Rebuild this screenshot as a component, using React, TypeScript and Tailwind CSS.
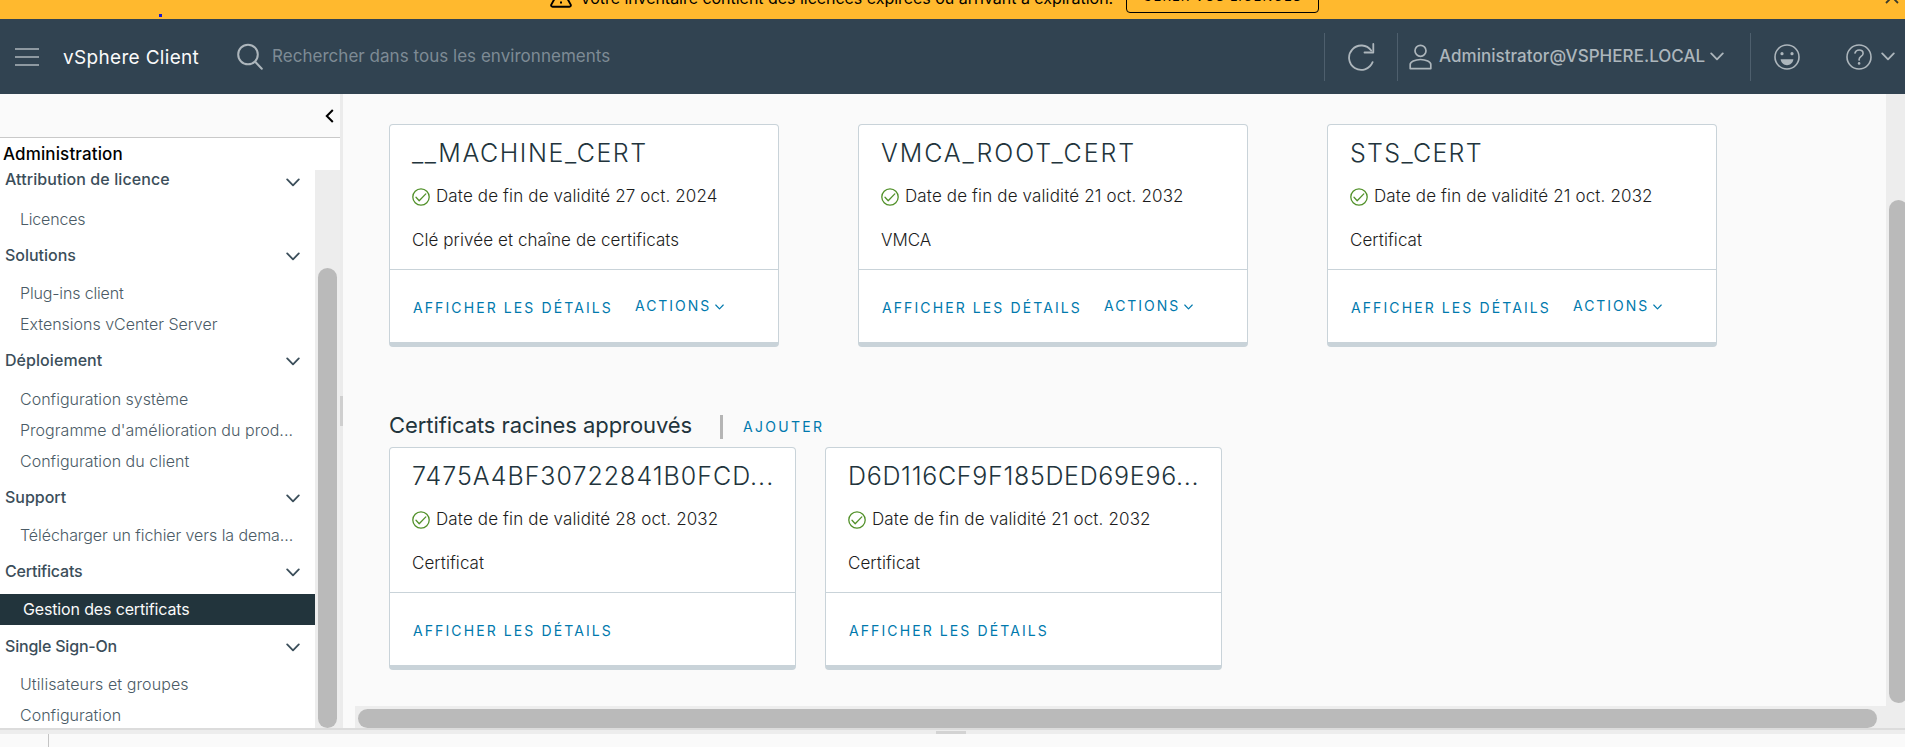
import type { ReactNode } from 'react';

function Chevron({ className }: { className: string }) {
  return (
    <svg viewBox="0 0 14 9" fill="none" stroke="currentColor" strokeWidth="1.8" strokeLinecap="round" strokeLinejoin="round" className={className}>
      <path d="M1.2 1.4 7 7.4l5.8-6" />
    </svg>
  );
}

function Banner() {
  return (
    <div className="relative h-[19px] shrink-0 overflow-hidden bg-[#ffb92e] text-black">
      <div className="-mt-[23px] flex h-[36px] items-end pl-[550px]">
        <svg viewBox="0 0 22 20" fill="none" stroke="currentColor" strokeWidth="1.9" strokeLinejoin="round" className="mb-[5px] h-5 w-[22px]">
          <path d="M9.6 1.8 1.3 16.6c-.5 1 .1 2.1 1.3 2.1h16.8c1.2 0 1.8-1.1 1.3-2.1L12.4 1.8c-.6-1-2.2-1-2.8 0Z" />
          <path d="M11 6.5v5M11 13.6v2" strokeWidth="2" />
        </svg>
        <span className="mb-[3px] ml-[8px] w-[546px] whitespace-nowrap text-[16px] font-[370] leading-[24px] tracking-[-0.03px]">
          Votre inventaire contient des licences expirées ou arrivant à expiration.
        </span>
        <button className="flex h-[32px] w-[193px] items-center justify-center whitespace-nowrap rounded-[4px] border border-black text-[13px] tracking-[1.1px]">
          GÉRER VOS LICENCES
        </button>
        <svg viewBox="0 0 14 14" fill="none" stroke="#3a3a2a" strokeWidth="1.8" className="mb-[9px] ml-[566px] h-[14px] w-[14px]">
          <path d="m1 1 12 12M13 1 1 13" />
        </svg>
      </div>
      <span className="absolute left-[159px] top-[14px] size-[3px] bg-[#1a1ad0]" />
    </div>
  );
}

function Divider() {
  return <span className="h-[48px] w-px bg-[#4e5f6d]" />;
}

function Header() {
  return (
    <header className="flex h-[75px] shrink-0 items-center bg-[#314351] text-[#adb6bc]">
      <svg viewBox="0 0 24 18" stroke="currentColor" strokeWidth="1.6" className="ml-[15px] h-[18px] w-6">
        <path d="M0 1h24M0 9h24M0 17h24" />
      </svg>
      <span className="ml-[24px] w-[150px] whitespace-nowrap pt-[3px] text-[19px] tracking-[0.32px] text-[#fafafa]">vSphere Client</span>
      <svg viewBox="0 0 26 27" fill="none" stroke="currentColor" strokeWidth="2" strokeLinecap="round" className="ml-[24px] h-[27px] w-[26px]">
        <circle cx="11" cy="11.5" r="9.8" />
        <path d="m18.2 18.8 6.6 7" />
      </svg>
      <span className="ml-[9px] whitespace-nowrap pt-px text-[17px] tracking-[0.03px] text-[#7e8b95]">Rechercher dans tous les environnements</span>
      <div className="ml-auto flex items-center">
        <Divider />
        <svg viewBox="0 0 28 28" fill="none" stroke="currentColor" strokeWidth="1.8" strokeLinecap="round" strokeLinejoin="round" className="ml-[22px] h-[28px] w-[28px]">
          <path d="M25.6 19.2A12.2 12.2 0 1 1 24.2 7.6" />
          <path d="M26.3 1v8.5h-8.8" />
        </svg>
        <span className="w-[22px]" />
        <Divider />
        <svg viewBox="0 0 23 26" fill="none" stroke="currentColor" strokeWidth="1.7" strokeLinejoin="round" className="ml-[11px] h-[26px] w-[23px]">
          <circle cx="11.5" cy="6.8" r="5.5" />
          <path d="M1.2 24.6v-4.2c0-2.3 4.7-4.9 10.3-4.9s10.3 2.6 10.3 4.9v4.2Z" />
        </svg>
        <span className="ml-[7px] w-[266px] whitespace-nowrap pt-px text-[17px] font-[450] tracking-[0.04px]">Administrator@VSPHERE.LOCAL</span>
        <Chevron className="ml-[5px] h-[9px] w-[14px]" />
        <span className="w-[26px]" />
        <Divider />
        <svg viewBox="0 0 26 26" fill="none" stroke="currentColor" strokeWidth="1.6" className="ml-[23px] h-[26px] w-[26px]">
          <circle cx="13" cy="13" r="12" />
          <circle cx="8" cy="9.7" r="1.6" fill="currentColor" stroke="none" />
          <circle cx="18" cy="9.7" r="1.6" fill="currentColor" stroke="none" />
          <path d="M6.6 15.3h12.8c-.5 3.5-3.2 5.9-6.4 5.9s-5.9-2.4-6.4-5.9Z" fill="currentColor" stroke="none" />
        </svg>
        <svg viewBox="0 0 26 26" fill="none" stroke="currentColor" strokeWidth="1.6" className="ml-[46px] h-[26px] w-[26px]">
          <circle cx="13" cy="13" r="12" />
          <path d="M9 9c.6-2 2.2-3 4.1-3 2.3 0 4 1.4 4 3.4 0 2.8-4 3.3-4 6v.7" strokeLinecap="round" />
          <circle cx="13.1" cy="19.4" r="1.3" fill="currentColor" stroke="none" />
        </svg>
        <Chevron className="ml-[9px] mr-[10px] h-[9px] w-[14px]" />
      </div>
    </header>
  );
}

function Group({ title, lift = 'pb-[2px]', tracking = 'tracking-[-0.02px]', children }: { title: string; lift?: string; tracking?: string; children: ReactNode }) {
  return (
    <section>
      <div className="flex h-[43.4px] items-center justify-between pl-[5px] pr-[15px] text-[#3b4e5a]">
        <span className={`text-[16px] font-[550] ${lift} ${tracking}`}>{title}</span>
        <Chevron className="mt-px h-[9px] w-[14px]" />
      </div>
      {children}
    </section>
  );
}

function Item({ children, tracking = 'tracking-[0.02px]' }: { children: string; tracking?: string }) {
  return (
    <div className={`flex h-[31px] items-center whitespace-nowrap pl-[20px] text-[16px] font-[350] text-[#4b5b66] ${tracking}`}>{children}</div>
  );
}

function Sidebar() {
  return (
    <aside className="flex w-[340px] shrink-0 flex-col bg-white">
      <div className="flex h-[44px] shrink-0 items-center justify-end border-b border-[#c9c9c9] bg-[#fafafa] pr-[6px]">
        <svg viewBox="0 0 9 14" fill="none" stroke="black" strokeWidth="2" className="h-[14px] w-[9px]">
          <path d="M7.8 1 1.8 7l6 6" />
        </svg>
      </div>
      <div className="h-[32px] shrink-0 pl-[3px] text-[17px] font-[550] leading-[32px] tracking-[0.13px] text-black">Administration</div>
      <div className="flex min-h-0 flex-1">
        <nav className="w-[315px] overflow-hidden">
          <div className="-mt-[10px]">
            <Group title="Attribution de licence" lift="pb-[5px]" tracking="tracking-[0.08px]">
              <Item tracking="tracking-[-0.2px]">Licences</Item>
            </Group>
            <Group title="Solutions">
              <Item tracking="tracking-[-0.15px]">Plug-ins client</Item>
              <Item tracking="tracking-[-0.01px]">Extensions vCenter Server</Item>
            </Group>
            <Group title="Déploiement" tracking="tracking-[0.06px]">
              <Item>Configuration système</Item>
              <Item tracking="tracking-[0.03px]">Programme d'amélioration du prod...</Item>
              <Item>Configuration du client</Item>
            </Group>
            <Group title="Support">
              <Item tracking="tracking-[-0.07px]">Télécharger un fichier vers la dema...</Item>
            </Group>
            <Group title="Certificats" tracking="tracking-[-0.2px]">
              <div className="flex h-[31px] items-center bg-[#22343c] pl-[23px] text-[16px] tracking-[-0.15px] text-[#fafafa]">Gestion des certificats</div>
            </Group>
            <Group title="Single Sign-On" tracking="tracking-[-0.2px]">
              <Item tracking="tracking-[0.1px]">Utilisateurs et groupes</Item>
              <Item>Configuration</Item>
            </Group>
          </div>
        </nav>
        <div className="flex-1 bg-[#ededed] pl-[3px] pr-[3px] pt-[98px]">
          <div className="h-[460px] w-[19px] rounded-full bg-[#bababa]" />
        </div>
      </div>
    </aside>
  );
}

type Cert = { title: string; titleClass: string; width: string; date: string; kind: string; kindClass?: string; actions?: boolean };

function Card({ title, titleClass, width, date, kind, kindClass = 'tracking-[-0.06px]', actions }: Cert) {
  return (
    <article className={`flex h-[223px] flex-col rounded-[4px] border border-b-[5px] border-[#c9d3d9] bg-white ${width}`}>
      <div className="h-[145px] border-b border-[#c9d3d9] pl-[22px]">
        <h3 className={`h-[54px] whitespace-nowrap text-[25px] font-[275] leading-[56px] text-[#22343c] ${titleClass}`}>{title}</h3>
        <div className="flex h-[32px] items-center">
          <svg viewBox="0 0 18 18" fill="none" stroke="#52912a" strokeWidth="1.3" strokeLinecap="round" strokeLinejoin="round" className="mt-[4px] size-[18px]">
            <circle cx="9" cy="9" r="8.2" />
            <path d="m4 9.3 3.2 3.4 6.6-6.8" />
          </svg>
          <span className="ml-[6px] whitespace-nowrap pt-[3px] text-[17px] font-[350] tracking-[0.14px] text-[#1c1c1c]">Date de fin de validité {date}</span>
        </div>
        <p className={`mt-[16px] text-[17px] font-[350] leading-[26px] text-[#1c1c1c] ${kindClass}`}>{kind}</p>
      </div>
      <div className="flex flex-1 items-center pl-[23px] pt-[3px] text-[14px] text-[#0079ad]">
        <button className="w-[222px] whitespace-nowrap text-left tracking-[2.1px]">AFFICHER LES DÉTAILS</button>
        {actions && (
          <button className="-mt-[4px] flex items-center gap-[4px] tracking-[1.95px]">
            ACTIONS
            <Chevron className="mt-[2px] h-[6px] w-[9px]" />
          </button>
        )}
      </div>
    </article>
  );
}

const machine: Cert[] = [
  { title: '__MACHINE_CERT', titleClass: 'tracking-[1.55px]', width: 'w-[390px]', date: '27 oct. 2024', kind: 'Clé privée et chaîne de certificats', kindClass: 'tracking-[0.08px]', actions: true },
  { title: 'VMCA_ROOT_CERT', titleClass: 'tracking-[1.9px]', width: 'w-[390px]', date: '21 oct. 2032', kind: 'VMCA', actions: true },
  { title: 'STS_CERT', titleClass: 'tracking-[1.3px]', width: 'w-[390px]', date: '21 oct. 2032', kind: 'Certificat', kindClass: 'tracking-[0.06px]', actions: true },
];

const roots: Cert[] = [
  { title: '7475A4BF30722841B0FCD...', titleClass: 'tracking-[1px]', width: 'w-[407px]', date: '28 oct. 2032', kind: 'Certificat', kindClass: 'tracking-[0.06px]' },
  { title: 'D6D116CF9F185DED69E96...', titleClass: 'tracking-[0.7px]', width: 'w-[397px]', date: '21 oct. 2032', kind: 'Certificat', kindClass: 'tracking-[0.06px]' },
];

function Main() {
  return (
    <main className="flex min-w-0 flex-1 flex-col bg-[#fafafa]">
      <div className="flex min-h-0 flex-1">
        <div className="flex-1 pl-[46px] pt-[30px]">
          <div className="flex gap-[79px]">
            {machine.map((c) => (
              <Card key={c.title} {...c} />
            ))}
          </div>
          <div className="mt-[65px] flex h-[35px] items-start">
            <h2 className="w-[331px] whitespace-nowrap text-[22px] leading-[26px] tracking-[-0.08px] text-[#22343c]">Certificats racines approuvés</h2>
            <span className="mt-[3px] h-[24px] w-[3px] bg-[#b5b5b5]" />
            <button className="ml-[20px] mt-px text-[14px] leading-[27px] tracking-[2.3px] text-[#0079ad]">AJOUTER</button>
          </div>
          <div className="flex gap-[29px]">
            {roots.map((c) => (
              <Card key={c.title} {...c} />
            ))}
          </div>
        </div>
        <div className="w-[19px] overflow-hidden bg-[#ededed] pl-[3px] pt-[106px]">
          <div className="h-[503px] w-[19px] rounded-full bg-[#bababa]" />
        </div>
      </div>
      <div className="ml-[12px] h-[22px] bg-[#ededed] pl-[3px] pt-[3px]">
        <div className="h-[19px] w-[1519px] rounded-full bg-[#bababa]" />
      </div>
    </main>
  );
}

export default function App() {
  return (
    <div className="flex h-[747px] w-[1905px] flex-col overflow-hidden bg-[#fafafa] font-['Inter','Liberation_Sans',sans-serif]">
      <Banner />
      <Header />
      <div className="flex h-[634px] shrink-0">
        <Sidebar />
        <div className="flex w-[3px] shrink-0 items-center bg-[#ebebeb]">
          <span className="h-[30px] w-[3px] bg-[#cfcfcf]" />
        </div>
        <Main />
      </div>
      <div className="flex h-[6px] shrink-0 items-end justify-center border-t-2 border-[#dcdcdc] bg-[#ededed] pr-[3px]">
        <span className="h-[3px] w-[30px] bg-[#d3d3d3]" />
      </div>
      <div className="w-[49px] flex-1 border-r border-[#c4c4c4]" />
    </div>
  );
}
